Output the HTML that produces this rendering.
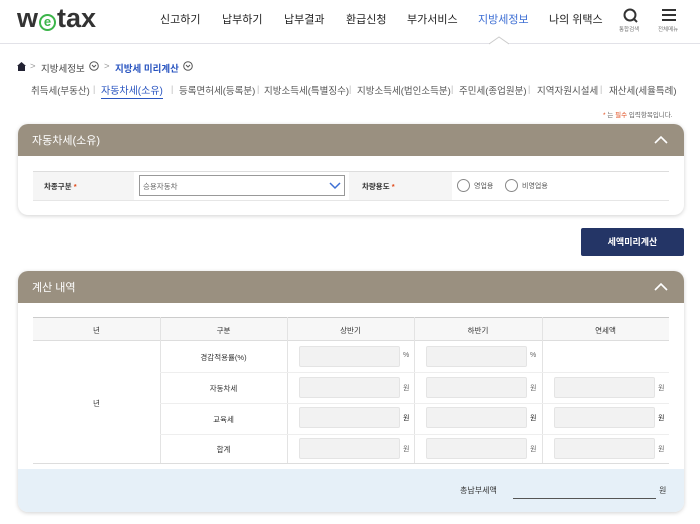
<!DOCTYPE html>
<html><head><meta charset="utf-8"><style>
*{margin:0;padding:0;box-sizing:border-box}
body{width:700px;height:524px;overflow:hidden;background:#fff;font-family:"Liberation Sans","Noto Sans CJK KR",sans-serif;color:#222;position:relative}
.a{position:absolute;white-space:nowrap}
.nav{top:11px;font-size:11px;color:#222}
.hdr{left:0;top:0;width:700px;height:44px;border-bottom:1px solid #e2e2e8}
.tab{top:83px;font-size:9.5px;color:#555}
.sep{top:84px;font-size:9px;color:#bbb}
.panel{left:18px;width:666px;background:#fff;border-radius:10px;box-shadow:0 1px 4px rgba(0,0,0,.18);overflow:hidden}
.ph{height:32px;background:#9a9080;color:#fff;font-size:11px;padding:8px 0 0 14px;position:relative}
.ph svg{position:absolute;right:16px;top:12px}
.inp{position:absolute;height:21px;background:#f2f2f2;border:1px solid #e4e4e4;border-radius:2px}
.u{position:absolute;font-size:7px;color:#666}
.cell{position:absolute;font-size:7.5px;color:#333;text-align:center}
</style></head><body>
<div class="a hdr"></div>
<div class="a" style="left:17px;top:3px;font-size:27px;font-weight:bold;color:#333;letter-spacing:0px">w<span style="display:inline-block;width:17px;height:17px;border:2px solid #3cb54a;border-radius:50%;font-size:13px;color:#3cb54a;line-height:12px;text-align:center;vertical-align:1px;font-weight:bold;margin:0 1px">e</span>tax</div>
<div class="a nav" style="left:160px">신고하기</div>
<div class="a nav" style="left:222px">납부하기</div>
<div class="a nav" style="left:284px">납부결과</div>
<div class="a nav" style="left:346px">환급신청</div>
<div class="a nav" style="left:407px">부가서비스</div>
<div class="a nav" style="left:478px;color:#3e6fd4">지방세정보</div>
<div class="a nav" style="left:549px">나의 위택스</div>
<svg class="a" style="left:489px;top:36px" width="20" height="9"><polyline points="0,8 10,1 20,8" fill="#fff" stroke="#ccc"/></svg>
<svg class="a" style="left:623px;top:8px" width="16" height="16"><circle cx="7" cy="7" r="5.5" fill="none" stroke="#333" stroke-width="2"/><line x1="11" y1="11" x2="14" y2="14" stroke="#333" stroke-width="2"/></svg>
<div class="a" style="left:619px;top:25px;font-size:5.5px;color:#777">통합검색</div>
<svg class="a" style="left:662px;top:9px" width="14" height="12"><path d="M0 1H14M0 6H14M0 11H14" stroke="#333" stroke-width="2"/></svg>
<div class="a" style="left:658px;top:25px;font-size:5.5px;color:#777">전체메뉴</div>

<svg class="a" style="left:17px;top:62px" width="9" height="9"><path d="M4.5 0L9 4H8V9H1V4H0Z" fill="#223"/></svg>
<div class="a" style="left:30px;top:61px;font-size:9.5px;color:#999">&gt;</div>
<div class="a" style="left:41px;top:61px;font-size:9.5px;color:#444">지방세정보</div>
<svg class="a" style="left:89px;top:61px" width="10" height="10"><circle cx="5" cy="5" r="4.3" fill="none" stroke="#555"/><polyline points="3,4 5,6 7,4" fill="none" stroke="#555"/></svg>
<div class="a" style="left:104px;top:61px;font-size:9.5px;color:#999">&gt;</div>
<div class="a" style="left:115px;top:61px;font-size:9.5px;color:#2a55c0;font-weight:bold">지방세 미리계산</div>
<svg class="a" style="left:183px;top:61px" width="10" height="10"><circle cx="5" cy="5" r="4.3" fill="none" stroke="#555"/><polyline points="3,4 5,6 7,4" fill="none" stroke="#555"/></svg>

<div class="a tab" style="left:31px">취득세(부동산)</div><div class="a sep" style="left:93px">|</div>
<div class="a tab" style="left:101px;color:#2a55c0;font-size:10px;top:82px;border-bottom:1.5px solid #2a55c0;padding-bottom:1px">자동차세(소유)</div><div class="a sep" style="left:171px">|</div>
<div class="a tab" style="left:179px">등록면허세(등록분)</div><div class="a sep" style="left:257px">|</div>
<div class="a tab" style="left:264px">지방소득세(특별징수)</div><div class="a sep" style="left:349px">|</div>
<div class="a tab" style="left:357px">지방소득세(법인소득분)</div><div class="a sep" style="left:451px">|</div>
<div class="a tab" style="left:459px">주민세(종업원분)</div><div class="a sep" style="left:528px">|</div>
<div class="a tab" style="left:537px">지역자원시설세</div><div class="a sep" style="left:600px">|</div>
<div class="a tab" style="left:609px">재산세(세율특례)</div>
<div class="a" style="left:603px;top:109px;font-size:6.5px;color:#666"><span style="color:#e04a1a">*</span> 는 <span style="color:#e04a1a">필수</span> 입력항목입니다.</div>

<div class="a panel" style="top:124px;height:91px">
<div class="ph">자동차세(소유)<svg width="14" height="8"><polyline points="1,7 7,1 13,7" fill="none" stroke="#fff" stroke-width="1.6"/></svg></div>
</div>
<div class="a" style="left:33px;top:171px;width:636px;height:30px;border-top:1px solid #ddd;border-bottom:1px solid #e6e6e6"></div>
<div class="a" style="left:33px;top:172px;width:101px;height:28px;background:#f5f5f5"></div>
<div class="a" style="left:349px;top:172px;width:103px;height:28px;background:#f5f5f5"></div>
<div class="a" style="left:44px;top:181px;font-size:7.5px;font-weight:bold;color:#333">차종구분 <span style="color:#e04a1a">*</span></div>
<div class="a" style="left:139px;top:175px;width:206px;height:21px;border:1px solid #999;background:#fff;font-size:7.5px;color:#666;padding:5px 0 0 3px">승용자동차</div>
<svg class="a" style="left:329px;top:182px" width="12" height="8"><polyline points="1,1 6,6 11,1" fill="none" stroke="#3e6fd4" stroke-width="1.5"/></svg>
<div class="a" style="left:362px;top:181px;font-size:7.5px;font-weight:bold;color:#333">차량용도 <span style="color:#e04a1a">*</span></div>
<div class="a" style="left:457px;top:179px;width:13px;height:13px;border:1px solid #888;border-radius:50%"></div>
<div class="a" style="left:474px;top:181px;font-size:7px;color:#555">영업용</div>
<div class="a" style="left:505px;top:179px;width:13px;height:13px;border:1px solid #888;border-radius:50%"></div>
<div class="a" style="left:522px;top:181px;font-size:7px;color:#555">비영업용</div>

<div class="a" style="left:581px;top:228px;width:103px;height:28px;background:#243566;border-radius:2px;color:#fff;font-size:9px;font-weight:bold;text-align:center;line-height:28px">세액미리계산</div>

<div class="a panel" style="top:271px;height:241px">
<div class="ph">계산 내역<svg width="14" height="8"><polyline points="1,7 7,1 13,7" fill="none" stroke="#fff" stroke-width="1.6"/></svg></div>
</div>
<div class="a" style="left:33px;top:317px;width:636px;height:24px;background:#f7f7f7;border-top:1px solid #ccc;border-bottom:1px solid #ddd"></div>
<div class="a" style="left:160px;top:317px;width:1px;height:146px;background:#e3e3e3"></div>
<div class="a" style="left:287px;top:317px;width:1px;height:146px;background:#e3e3e3"></div>
<div class="a" style="left:414px;top:317px;width:1px;height:146px;background:#e3e3e3"></div>
<div class="a" style="left:542px;top:317px;width:1px;height:146px;background:#e3e3e3"></div>
<div class="a" style="left:160px;top:372px;width:509px;height:1px;background:#eee"></div>
<div class="a" style="left:160px;top:403px;width:509px;height:1px;background:#eee"></div>
<div class="a" style="left:160px;top:434px;width:509px;height:1px;background:#eee"></div>
<div class="a" style="left:33px;top:463px;width:636px;height:1px;background:#ddd"></div>
<div class="cell" style="left:33px;width:127px;top:325px">년</div>
<div class="cell" style="left:160px;width:127px;top:325px">구분</div>
<div class="cell" style="left:287px;width:127px;top:325px">상반기</div>
<div class="cell" style="left:414px;width:128px;top:325px">하반기</div>
<div class="cell" style="left:542px;width:127px;top:325px">연세액</div>
<div class="cell" style="left:33px;width:127px;top:398px">년</div>
<div class="cell" style="left:160px;width:127px;top:352px">경감적용률(%)</div>
<div class="cell" style="left:160px;width:127px;top:383px">자동차세</div>
<div class="cell" style="left:160px;width:127px;top:414px">교육세</div>
<div class="cell" style="left:160px;width:127px;top:444px">합계</div>

<div class="inp" style="left:299px;top:346px;width:101px"></div><div class="u" style="left:403px;top:352px">%</div>
<div class="inp" style="left:426px;top:346px;width:101px"></div><div class="u" style="left:530px;top:352px">%</div>
<div class="inp" style="left:299px;top:377px;width:101px"></div><div class="u" style="left:403px;top:383px">원</div>
<div class="inp" style="left:426px;top:377px;width:101px"></div><div class="u" style="left:530px;top:383px">원</div>
<div class="inp" style="left:554px;top:377px;width:101px"></div><div class="u" style="left:658px;top:383px">원</div>
<div class="inp" style="left:299px;top:407px;width:101px"></div><div class="u" style="left:403px;top:413px;color:#222">원</div>
<div class="inp" style="left:426px;top:407px;width:101px"></div><div class="u" style="left:530px;top:413px;color:#222">원</div>
<div class="inp" style="left:554px;top:407px;width:101px"></div><div class="u" style="left:658px;top:413px;color:#222">원</div>
<div class="inp" style="left:299px;top:438px;width:101px"></div><div class="u" style="left:403px;top:444px">원</div>
<div class="inp" style="left:426px;top:438px;width:101px"></div><div class="u" style="left:530px;top:444px">원</div>
<div class="inp" style="left:554px;top:438px;width:101px"></div><div class="u" style="left:658px;top:444px">원</div>

<div class="a" style="left:18px;top:469px;width:666px;height:43px;background:#e6f0f8;border-radius:0 0 10px 10px"></div>
<div class="a" style="left:460px;top:485px;font-size:8px;color:#333">총납부세액</div>
<div class="a" style="left:513px;top:498px;width:143px;height:1px;background:#555"></div>
<div class="a" style="left:659px;top:485px;font-size:8px;color:#333">원</div>
</body></html>
